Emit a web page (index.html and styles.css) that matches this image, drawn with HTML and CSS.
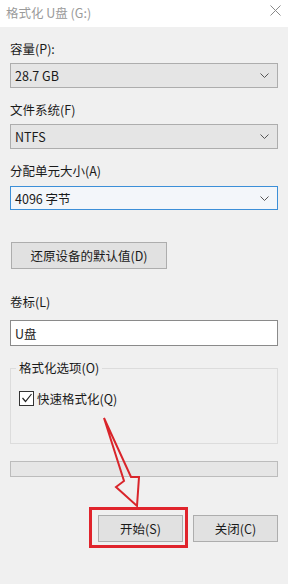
FILE: index.html
```html
<!DOCTYPE html>
<html lang="zh-CN">
<head>
    <meta charset="UTF-8">
    <meta name="viewport" content="width=device-width, initial-scale=1.0">
    <title>格式化 U盘 (G:)</title>
    <link rel="stylesheet" href="styles.css">
</head>
<body>

    <div class="titlebar">
        <span class="title">格式化 U盘 (G:)</span>
        <svg class="close" width="11" height="11" viewBox="0 0 11 11">
            <path d="M0.5 0.5 L10.5 10.5 M10.5 0.5 L0.5 10.5" stroke="#8a8a8a" stroke-width="1" fill="none"/>
        </svg>
    </div>

    <div class="content">
        <div class="label">容量(P):</div>
        <div class="combo">
            <span>28.7 GB</span>
            <svg class="chevron" width="9" height="5" viewBox="0 0 9 5"><path d="M0.5 0.5 L4.5 4.5 L8.5 0.5" stroke="#555" fill="none"/></svg>
        </div>

        <div class="label">文件系统(F)</div>
        <div class="combo">
            <span>NTFS</span>
            <svg class="chevron" width="9" height="5" viewBox="0 0 9 5"><path d="M0.5 0.5 L4.5 4.5 L8.5 0.5" stroke="#555" fill="none"/></svg>
        </div>

        <div class="label">分配单元大小(A)</div>
        <div class="combo focused">
            <span>4096 字节</span>
            <svg class="chevron" width="9" height="5" viewBox="0 0 9 5"><path d="M0.5 0.5 L4.5 4.5 L8.5 0.5" stroke="#555" fill="none"/></svg>
        </div>

        <button class="btn restore">还原设备的默认值(D)</button>

        <div class="label volume">卷标(L)</div>
        <input type="text" class="textbox" value="U盘">

        <fieldset class="group">
            <legend>格式化选项(O)</legend>
            <label class="check">
                <span class="box">
                    <svg width="12" height="12" viewBox="0 0 12 12"><path d="M1.5 6 L4.5 9.5 L10.5 2" stroke="#222" stroke-width="1.2" fill="none"/></svg>
                </span>
                快速格式化(Q)
            </label>
        </fieldset>

        <div class="progress"></div>

        <div class="actions">
            <div class="start-wrap">
                <button class="btn action">开始(S)</button>
                <div class="highlight"></div>
            </div>
            <button class="btn action">关闭(C)</button>
        </div>
    </div>

    <!-- annotation arrow -->
    <svg class="arrow" width="50" height="100" viewBox="95 410 50 100">
        <path d="M104 418 L131 477 L139 477 L137 506 L116 487 L124 481 Z" stroke="#d9252b" stroke-width="2" fill="none" stroke-linejoin="miter"/>
    </svg>

</body>
</html>
```

FILE: styles.css
```css
body {
    font-family: "Noto Sans CJK SC", "Noto Sans", sans-serif;
    font-size: 12.5px;
    color: #1a1a1a;
    background-color: #f0f0f0;
    margin: 0;
    width: 288px;
    height: 584px;
    position: relative;
    overflow: hidden;
}
.titlebar {
    height: 27px;
    background-color: #fff;
    display: flex;
    align-items: center;
    justify-content: space-between;
    padding: 0 7px 0 6px;
    box-sizing: border-box;
}
.title {
    color: #9a9a9a;
    font-size: 12.5px;
    margin-top: -2px;
}
.close {
    margin-top: -6px;
}
.content {
    padding: 14px 10px 0 10px;
    display: flex;
    flex-direction: column;
}
.label {
    height: 16px;
    line-height: 16px;
}
.label + .combo {
    margin-top: 6px;
}
.combo {
    height: 25px;
    box-sizing: border-box;
    border: 1px solid #adadad;
    background-color: #e5e5e5;
    display: flex;
    align-items: center;
    justify-content: space-between;
    padding: 0 8px 0 4px;
    margin-bottom: 14px;
}
.combo.focused {
    border-color: #3c8fd8;
    background-color: #f3f6fa;
    margin-top: 7px !important;
    height: 24px;
}
.btn {
    font-family: inherit;
    font-size: 12.5px;
    color: #1a1a1a;
    background-color: #e1e1e1;
    border: 1px solid #adadad;
    height: 27px;
    padding: 0;
    box-sizing: border-box;
}
.restore {
    width: 156px;
    margin: 18px 0 0 1px;
}
.label.volume {
    margin-top: 25px;
}
.textbox {
    margin-top: 10px;
    height: 26px;
    box-sizing: border-box;
    border: 1px solid #8a8a8a;
    background-color: #fff;
    font-family: inherit;
    font-size: 12.5px;
    color: #1a1a1a;
    padding: 0 4px;
    outline: none;
}
.group {
    margin: 14px 0 0 0;
    padding: 0 5px 37px 5px;
    border: 1px solid #dcdcdc;
    min-width: 0;
}
.group legend {
    padding: 0 3px;
    height: 16px;
    line-height: 16px;
}
.check {
    margin-top: 14px;
    margin-left: 3px;
    height: 16px;
    display: flex;
    align-items: center;
    gap: 3px;
}
.box {
    width: 13px;
    height: 13px;
    border: 1px solid #333;
    background-color: #fff;
    display: flex;
    align-items: center;
    justify-content: center;
}
.progress {
    margin-top: 17px;
    height: 16px;
    box-sizing: border-box;
    border: 1px solid #bcbcbc;
    background-color: #e6e6e6;
}
.actions {
    margin-top: 38px;
    display: flex;
    justify-content: flex-end;
    gap: 10px;
}
.start-wrap {
    position: relative;
}
.action {
    width: 85px;
}
.highlight {
    position: absolute;
    left: -9px;
    right: -5px;
    top: -8px;
    bottom: -6px;
    border: 3px solid #e0242c;
}
.arrow {
    position: absolute;
    left: 95px;
    top: 410px;
}
```
